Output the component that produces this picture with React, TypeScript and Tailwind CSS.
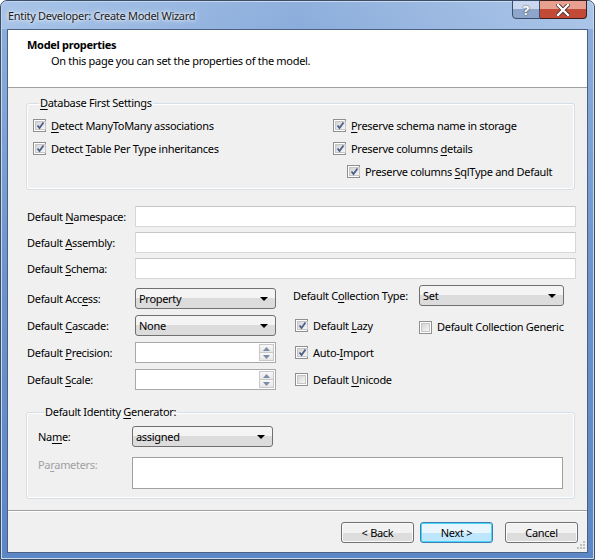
import React from "react";

const U = ({ children }: { children: React.ReactNode }) => (
  <span className="underline underline-offset-[2px] decoration-[1px]">{children}</span>
);

const Check = ({ checked }: { checked?: boolean }) => (
  <span className="w-[13px] h-[13px] shrink-0 border border-[#8f8f8f] bg-white p-[1px] flex">
    <span className="flex-1 bg-gradient-to-br from-[#d4d4d4] to-[#f7f7f7] border border-[#c6c6c6] flex items-center justify-center">
      {checked && (
        <svg width="9" height="9" viewBox="0 0 9 9">
          <path d="M1.5 4.5 L3.5 7 L7.5 1.5" fill="none" stroke="#4b5f8a" strokeWidth="1.8" />
        </svg>
      )}
    </span>
  </span>
);

const CheckRow = ({ checked, children, className = "" }: { checked?: boolean; children: React.ReactNode; className?: string }) => (
  <div className={`flex items-center gap-[5px] ${className}`}>
    <Check checked={checked} />
    <span>{children}</span>
  </div>
);

const Combo = ({ value, className = "" }: { value: string; className?: string }) => (
  <div
    className={`h-[21px] rounded-[3px] border border-[#707070] bg-gradient-to-b from-[#f4f4f4] from-50% to-[#dcdcdc] to-50% flex items-center pl-[3px] pr-[7px] ${className}`}
  >
    <span className="flex-1">{value}</span>
    <svg width="8" height="4" viewBox="0 0 8 4">
      <path d="M0 0 L8 0 L4 4 Z" fill="#000" />
    </svg>
  </div>
);

const TextBox = ({ className = "" }: { className?: string }) => (
  <div className={`h-[21px] bg-white border border-[#d7d7d7] border-t-[#c6c6c6] ${className}`} />
);

const Spin = () => (
  <div className="h-[21px] w-[141px] bg-white border border-[#a9a9a9] flex justify-end p-[1px]">
    <div className="w-[15px] flex flex-col">
      <div className="flex-1 border border-[#c8c8c8] bg-gradient-to-b from-[#f8f8f8] to-[#e6e6e6] flex items-center justify-center">
        <svg width="7" height="4" viewBox="0 0 7 4">
          <path d="M0 4 L7 4 L3.5 0 Z" fill="#7b8ca8" />
        </svg>
      </div>
      <div className="flex-1 border border-[#c8c8c8] border-t-0 bg-gradient-to-b from-[#f8f8f8] to-[#e6e6e6] flex items-center justify-center">
        <svg width="7" height="4" viewBox="0 0 7 4">
          <path d="M0 0 L7 0 L3.5 4 Z" fill="#7b8ca8" />
        </svg>
      </div>
    </div>
  </div>
);

const Button = ({ children, def }: { children: React.ReactNode; def?: boolean }) => (
  <div
    className={`w-[73px] h-[21px] rounded-[3px] border flex items-center justify-center ${
      def
        ? "border-[#3c7fb1] bg-gradient-to-b from-[#eaf6fd] from-50% to-[#bee6fd] to-50% shadow-[inset_0_0_0_1px_#48d7fb]"
        : "border-[#707070] bg-gradient-to-b from-[#f2f2f2] from-50% to-[#dddddd] to-50% shadow-[inset_0_0_0_1px_#fbfbfb]"
    }`}
  >
    {children}
  </div>
);

export default function App() {
  return (
    <div className="w-[595px] h-[560px] font-['Noto_Sans',sans-serif] text-[11px] tracking-[-0.3px] leading-[14px] text-black whitespace-nowrap">
      <div className="w-full h-full rounded-t-[7px] border border-[#3c4d66] bg-gradient-to-b from-[#8fb0dd] via-[#6c93cc] to-[#5b87c6] flex flex-col shadow-[inset_0_0_0_1px_#c9daf0]">
        {/* title bar */}
        <div className="h-[28px] flex items-start relative shrink-0">
          <div className="absolute inset-0 rounded-t-[6px] bg-gradient-to-r from-[#b9d1ef]/60 via-transparent to-[#c7dbf2]/50" />
          <span className="relative pl-[7px] pt-[8px] text-[11px] text-[#1b1b1b] [text-shadow:0_0_6px_#fff,0_0_3px_#fff]">
            Entity Developer: Create Model Wizard
          </span>
          <div className="relative ml-auto mr-[7px] flex h-[19px] -mt-[1px]">
            <div className="w-[28px] h-full rounded-bl-[4px] border border-[#3a4d6b] bg-gradient-to-b from-[#c9d8ee] from-50% to-[#8ea6cc] to-50% flex items-center justify-center text-white font-bold text-[13px] [text-shadow:0_0_2px_#333]">
              ?
            </div>
            <div className="w-[47px] h-full rounded-br-[4px] border border-l-0 border-[#3a1f1f] bg-gradient-to-b from-[#e8a090] from-50% to-[#c24a36] to-50% flex items-center justify-center">
              <svg width="14" height="12" viewBox="0 0 14 12">
                <path d="M2 1 L12 11 M12 1 L2 11" stroke="#4a2a2a" strokeWidth="4" strokeLinecap="square" />
                <path d="M2 1 L12 11 M12 1 L2 11" stroke="#fff" strokeWidth="2.4" strokeLinecap="square" />
              </svg>
            </div>
          </div>
        </div>

        {/* client area */}
        <div className="mx-[6px] mb-[6px] flex-1 bg-[#f0f0f0] border border-[#4a6184] flex flex-col">
          {/* header */}
          <div className="h-[58px] bg-white border-b border-[#a0a0a0] pl-[19px] pt-[8px] shrink-0">
            <div className="font-bold">Model properties</div>
            <div className="pl-[24px] mt-[2px]">On this page you can set the properties of the model.</div>
          </div>

          <div className="pl-[18px] pr-[11px]">
            {/* Database First Settings */}
            <fieldset className="mt-[8px] mr-[1px] h-[94px] border border-[#d5dfe5] rounded-[3px] shadow-[inset_0_0_0_1px_#fff] px-[6px]">
              <legend className="ml-[6px] px-[1px] leading-[14px]">
                <U>D</U>atabase First Settings
              </legend>
              <div className="flex pt-[4px]">
                <div className="w-[300px]">
                  <CheckRow checked className="h-[23px]">
                    <U>D</U>etect ManyToMany associations
                  </CheckRow>
                  <CheckRow checked className="h-[23px]">
                    Detect <U>T</U>able Per Type inheritances
                  </CheckRow>
                </div>
                <div>
                  <CheckRow checked className="h-[23px]">
                    <U>P</U>reserve schema name in storage
                  </CheckRow>
                  <CheckRow checked className="h-[23px]">
                    Preserve columns <U>d</U>etails
                  </CheckRow>
                  <CheckRow checked className="h-[23px] pl-[14px]">
                    Preserve columns <U>S</U>qlType and Default
                  </CheckRow>
                </div>
              </div>
            </fieldset>

            {/* text fields */}
            <div className="mt-[16px] flex flex-col gap-[5px] pl-[1px]">
              {[
                ["Default ", "N", "amespace:"],
                ["Default ", "A", "ssembly:"],
                ["Default ", "S", "chema:"],
              ].map(([a, b, c]) => (
                <div key={c} className="flex items-center">
                  <span className="w-[108px]">
                    {a}
                    <U>{b}</U>
                    {c}
                  </span>
                  <TextBox className="flex-1" />
                </div>
              ))}
            </div>

            {/* two columns */}
            <div className="mt-[9px] flex pl-[1px]">
              <div className="flex flex-col gap-[6px]">
                <div className="flex items-center">
                  <span className="w-[108px]">
                    Default Acc<U>e</U>ss:
                  </span>
                  <Combo value="Property" className="w-[141px]" />
                </div>
                <div className="flex items-center">
                  <span className="w-[108px]">
                    Default <U>C</U>ascade:
                  </span>
                  <Combo value="None" className="w-[141px]" />
                </div>
                <div className="flex items-center">
                  <span className="w-[108px]">
                    Default <U>P</U>recision:
                  </span>
                  <Spin />
                </div>
                <div className="flex items-center">
                  <span className="w-[108px]">
                    Default <U>S</U>cale:
                  </span>
                  <Spin />
                </div>
              </div>
              <div className="ml-[17px] -mt-[3px] flex flex-col">
                <div className="flex items-center h-[21px]">
                  <span className="w-[126px]">
                    Default C<U>o</U>llection Type:
                  </span>
                  <Combo value="Set" className="w-[145px]" />
                </div>
                <div className="flex items-center h-[27px] mt-[6px]">
                  <CheckRow checked className="w-[126px] pl-[2px]">
                    Default <U>L</U>azy
                  </CheckRow>
                  <CheckRow className="pt-[3px]">Default Collection Generic</CheckRow>
                </div>
                <CheckRow checked className="h-[27px] pl-[2px]">
                  Auto-<U>I</U>mport
                </CheckRow>
                <CheckRow className="h-[27px] pl-[2px]">
                  Default <U>U</U>nicode
                </CheckRow>
              </div>
            </div>

            {/* Identity generator */}
            <fieldset className="mt-[12px] mr-[1px] h-[94px] border border-[#d5dfe5] rounded-[3px] shadow-[inset_0_0_0_1px_#fff] pl-[11px] pr-[11px]">
              <legend className="ml-[6px] px-[1px] leading-[14px]">
                Default Identity <U>G</U>enerator:
              </legend>
              <div className="pt-[7px] flex flex-col gap-[10px]">
                <div className="flex items-center">
                  <span className="w-[94px]">
                    Na<U>m</U>e:
                  </span>
                  <Combo value="assigned" className="w-[141px]" />
                </div>
                <div className="flex items-start">
                  <span className="w-[94px] text-[#a0a0a0] pt-[1px]">
                    Pa<U>r</U>ameters:
                  </span>
                  <div className="flex-1 h-[32px] bg-white border border-[#a0a0a0]" />
                </div>
              </div>
            </fieldset>
          </div>

          {/* footer */}
          <div className="mt-auto border-t border-[#a0a0a0] shadow-[inset_0_1px_0_#fff] h-[42px] flex items-start justify-end gap-[6px] pt-[11px] pr-[9px] relative">
            <Button>&lt; Back</Button>
            <Button def>Next &gt;</Button>
            <div className="ml-[6px]">
              <Button>Cancel</Button>
            </div>
            <svg className="absolute right-[2px] bottom-[3px]" width="8" height="8" viewBox="0 0 8 8">
              <rect x="6" y="0" width="2" height="2" fill="#c0c0c0" />
              <rect x="3" y="3" width="2" height="2" fill="#c0c0c0" />
              <rect x="6" y="3" width="2" height="2" fill="#c0c0c0" />
              <rect x="0" y="6" width="2" height="2" fill="#c0c0c0" />
              <rect x="3" y="6" width="2" height="2" fill="#c0c0c0" />
              <rect x="6" y="6" width="2" height="2" fill="#c0c0c0" />
            </svg>
          </div>
        </div>
      </div>
    </div>
  );
}
